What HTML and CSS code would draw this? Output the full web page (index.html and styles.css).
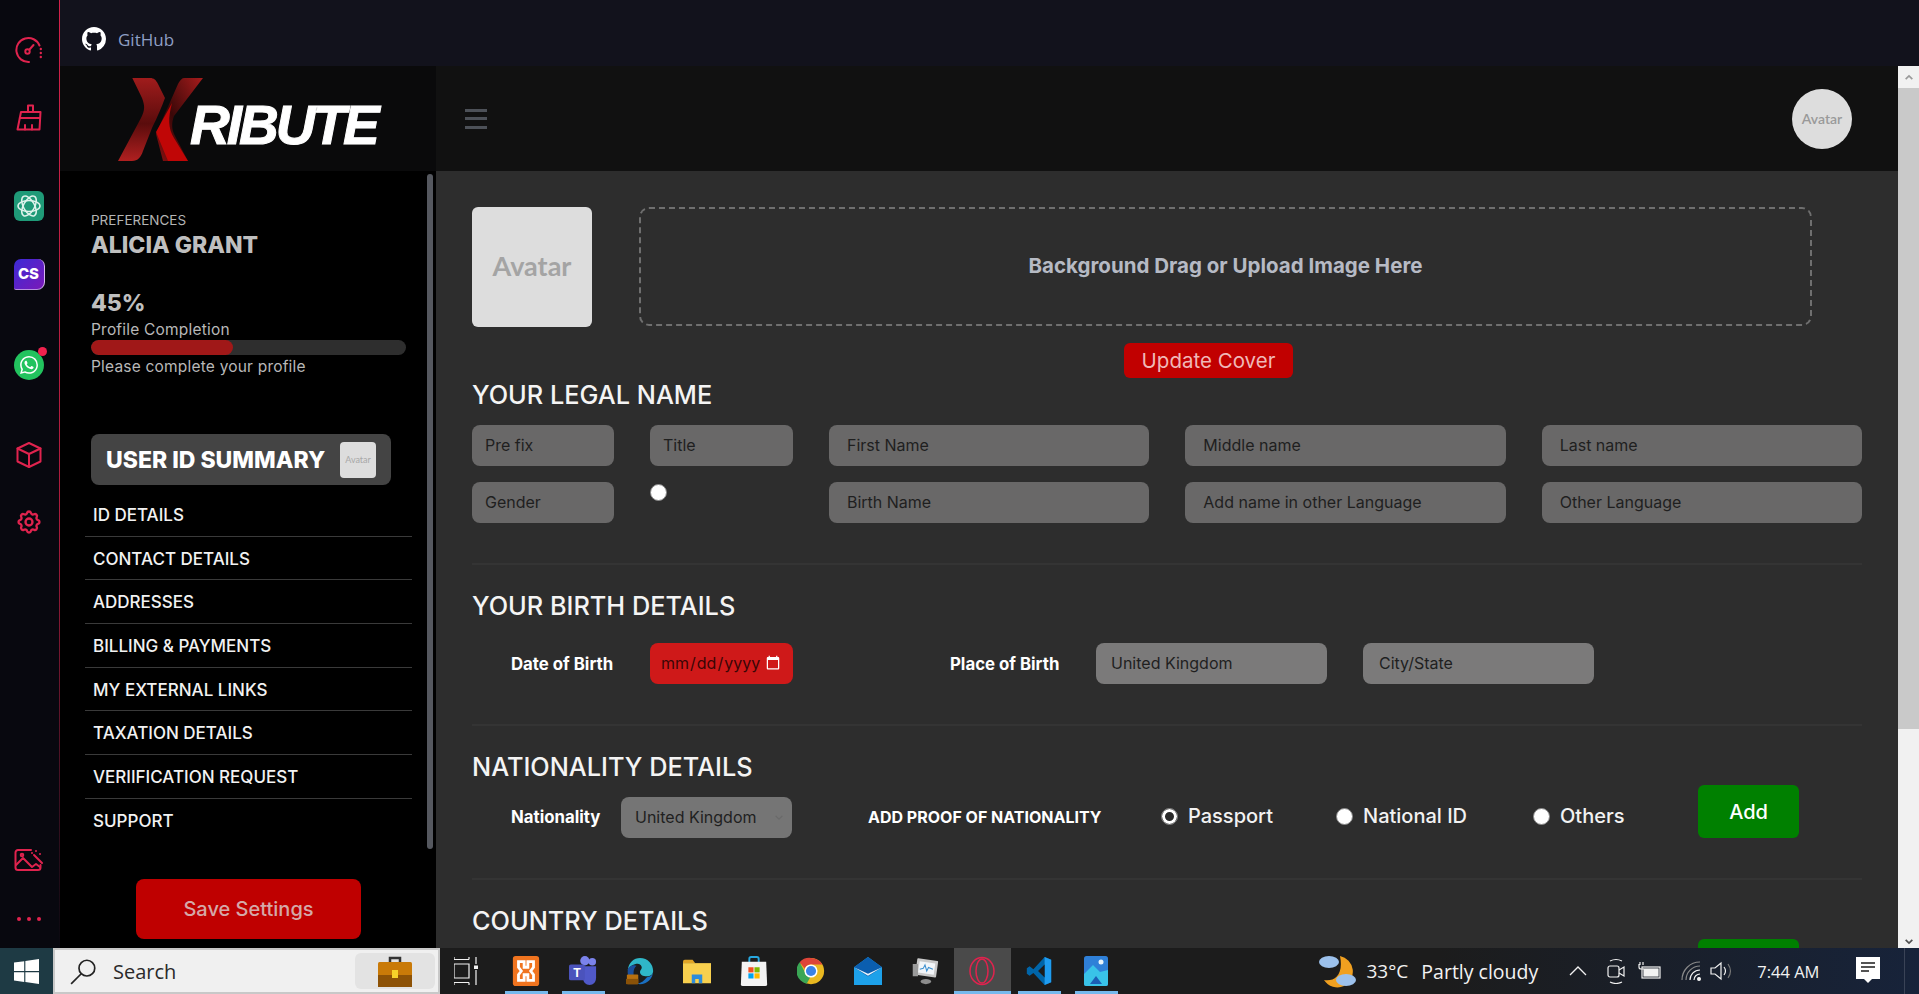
FILE: index.html
```html
<!DOCTYPE html>
<html lang="en">
<head>
  <meta charset="UTF-8">
  <meta name="viewport" content="width=device-width, initial-scale=1">
  <title>Xribute Preferences</title>
  <link rel="stylesheet" href="styles.css">
</head>
<body>
  <div class="desk">
    <nav class="rail">
      <div class="rail-group rail-top">
        <svg class="rail-icon" viewBox="0 0 28 28"><path d="M24.5 9.5A12 12 0 1 0 14 26"/><circle cx="12.500" cy="15.500" r="2.200"/><path d="M14.500 13.500l4-4.500"/><path d="M25.800 13v.1M25.800 17v.1M25.800 21v.1" stroke-width="2.400"/></svg>
        <svg class="rail-icon" viewBox="0 0 28 28"><path d="M13 8V1.500h5V8"/><path d="M6 8h19.500L24.500 25.500H2.500L6 8z"/><path d="M4.800 14h20.200"/><path d="M10 25.500v-4.500M17 25.500v-4.500"/></svg>
      </div>
      <div class="rail-group rail-apps">
        <div class="app-chat">
          <svg viewBox="0 0 30 30"><g fill="none" stroke="#dff3ec" stroke-width="1.500"><ellipse cx="15" cy="15" rx="11" ry="5.500"/><ellipse cx="15" cy="15" rx="11" ry="5.500" transform="rotate(60 15 15)"/><ellipse cx="15" cy="15" rx="11" ry="5.500" transform="rotate(120 15 15)"/></g></svg>
        </div>
        <div class="app-cs">CS</div>
        <div class="app-whatsapp">
          <svg viewBox="0 0 24 24"><path fill="#fff" d="M17.472 14.382c-.297-.149-1.758-.867-2.03-.967-.273-.099-.471-.148-.67.15-.197.297-.767.966-.94 1.164-.173.199-.347.223-.644.075-.297-.15-1.255-.463-2.39-1.475-.883-.788-1.48-1.761-1.653-2.059-.173-.297-.018-.458.13-.606.134-.133.298-.347.446-.52.149-.174.198-.298.298-.497.099-.198.05-.371-.025-.52-.075-.149-.669-1.612-.916-2.207-.242-.579-.487-.5-.669-.51-.173-.008-.371-.01-.57-.01-.198 0-.52.074-.792.372-.272.297-1.04 1.016-1.04 2.479 0 1.462 1.065 2.875 1.213 3.074.149.198 2.096 3.2 5.077 4.487.709.306 1.262.489 1.694.625.712.227 1.36.195 1.871.118.571-.085 1.758-.719 2.006-1.413.248-.694.248-1.289.173-1.413-.074-.124-.272-.198-.57-.347m-5.421 7.403h-.004a9.87 9.87 0 01-5.031-1.378l-.361-.214-3.741.982.998-3.648-.235-.374a9.86 9.86 0 01-1.51-5.26c.001-5.45 4.436-9.884 9.888-9.884 2.64 0 5.122 1.03 6.988 2.898a9.825 9.825 0 012.893 6.994c-.003 5.45-4.437 9.884-9.885 9.884m8.413-18.297A11.815 11.815 0 0012.05 0C5.495 0 .16 5.335.157 11.892c0 2.096.547 4.142 1.588 5.945L.057 24l6.305-1.654a11.882 11.882 0 005.683 1.448h.005c6.554 0 11.89-5.335 11.893-11.893a11.821 11.821 0 00-3.48-8.413Z"/></svg>
          <span class="badge"></span>
        </div>
      </div>
      <div class="rail-group rail-tools">
        <svg class="rail-icon" viewBox="0 0 28 28"><path d="M14 2l11.500 5.500v13L14 26 2.500 20.500v-13L14 2z"/><path d="M2.500 7.500L14 13l11.500-5.500M14 13v13"/></svg>
        <svg class="rail-icon" viewBox="0 0 24 24" stroke-width="1.900"><path d="M10.325 4.317c.426 -1.756 2.924 -1.756 3.35 0a1.724 1.724 0 0 0 2.573 1.066c1.543 -.94 3.31 .826 2.37 2.37a1.724 1.724 0 0 0 1.065 2.572c1.756 .426 1.756 2.924 0 3.35a1.724 1.724 0 0 0 -1.066 2.573c.94 1.543 -.826 3.31 -2.37 2.37a1.724 1.724 0 0 0 -2.572 1.065c-.426 1.756 -2.924 1.756 -3.35 0a1.724 1.724 0 0 0 -2.573 -1.066c-1.543 .94 -3.31 -.826 -2.37 -2.37a1.724 1.724 0 0 0 -1.065 -2.572c-1.756 -.426 -1.756 -2.924 0 -3.35a1.724 1.724 0 0 0 1.066 -2.573c-.94 -1.543 .826 -3.31 2.37 -2.37c1 .608 2.296 .07 2.572 -1.065z"/><circle cx="12" cy="12" r="3"/></svg>
      </div>
      <div class="rail-group rail-bottom">
        <svg class="rail-icon rail-wide" viewBox="0 0 30 24"><path d="M17 2H4a2.500 2.500 0 0 0-2.500 2.500v15A2.500 2.500 0 0 0 4 22h20a2.500 2.500 0 0 0 2.500-2.500V17"/><path d="M2 17l7-7 9 9 4-3 4 3"/><circle cx="8" cy="7" r="1.300"/><path d="M20 7l8 8M22 3v.1M26 6v.1M18 5v.1"/></svg>
        <div class="rail-dots"><span></span><span></span><span></span></div>
      </div>
    </nav>

    <div class="workspace">
      <div class="topbar">
        <svg class="github" viewBox="0 0 16 16"><path fill="#fff" d="M8 0C3.58 0 0 3.58 0 8c0 3.54 2.29 6.53 5.47 7.59.4.07.55-.17.55-.38 0-.19-.01-.82-.01-1.49-2.01.37-2.53-.49-2.69-.94-.09-.23-.48-.94-.82-1.13-.28-.15-.68-.52-.01-.53.63-.01 1.08.58 1.23.82.72 1.21 1.87.87 2.33.66.07-.52.28-.87.51-1.07-1.78-.2-3.64-.89-3.64-3.95 0-.87.31-1.59.82-2.15-.08-.2-.36-1.02.08-2.12 0 0 .67-.21 2.2.82.64-.18 1.32-.27 2-.27.68 0 1.36.09 2 .27 1.53-1.04 2.2-.82 2.2-.82.44 1.1.16 1.92.08 2.12.51.56.82 1.27.82 2.15 0 3.07-1.87 3.75-3.65 3.95.29.25.54.73.54 1.48 0 1.07-.01 1.93-.01 2.2 0 .21.15.46.55.38A8.013 8.013 0 0016 8c0-4.42-3.58-8-8-8z"/></svg>
        <span class="github-label">GitHub</span>
      </div>

      <div class="page">
        <aside class="sidebar">
          <div class="logo">
            <svg class="logo-x" viewBox="0 0 85 83">
              <defs>
                <linearGradient id="xa" x1="0" y1="0" x2="0" y2="1"><stop offset="0" stop-color="#a01c1c"/><stop offset=".55" stop-color="#5a0c0c"/><stop offset="1" stop-color="#b02020"/></linearGradient>
                <linearGradient id="xb" x1="1" y1="0" x2="0" y2="1"><stop offset="0" stop-color="#a81c1c"/><stop offset=".55" stop-color="#3a0808"/><stop offset="1" stop-color="#8a1010"/></linearGradient>
              </defs>
              <path fill="url(#xa)" d="M14.300 0H32C36 0 38 2 40 6L47 20C44 28 40 38 34 50L25 73C23 79 20 83 14 83H0L23 40C27 32 27 28 24 20Z"/>
              <path fill="url(#xb)" d="M85 0L56 38C53 46 54 52 57 58L70 83H45L38 56L60 6C63 1 64 0 67 0Z"/>
              <path fill="#c00606" d="M54 25C50 40 50 50 56 60L70 83H50L38 54Z"/>
            </svg>
            <span class="logo-text">RIBUTE</span>
          </div>
          <div class="side-body">
            <div class="side-eyebrow">PREFERENCES</div>
            <div class="side-name">ALICIA GRANT</div>
            <div class="side-pct">45%</div>
            <div class="side-note">Profile Completion</div>
            <div class="progress"><div class="progress-fill" style="width:45%"></div></div>
            <div class="side-note">Please complete your profile</div>
            <div class="summary">
              <span class="summary-title">USER ID SUMMARY</span>
              <span class="summary-avatar">Avatar</span>
            </div>
            <ul class="side-menu">
              <li>ID DETAILS</li>
              <li>CONTACT DETAILS</li>
              <li>ADDRESSES</li>
              <li>BILLING &amp; PAYMENTS</li>
              <li>MY EXTERNAL LINKS</li>
              <li>TAXATION DETAILS</li>
              <li>VERIIFICATION REQUEST</li>
              <li>SUPPORT</li>
            </ul>
            <button class="btn-save">Save Settings</button>
          </div>
          <div class="side-thumb"></div>
        </aside>

        <div class="main">
          <header class="main-head">
            <div class="burger"><span></span><span></span><span></span></div>
            <div class="head-avatar">Avatar</div>
          </header>
          <main class="content">
            <div class="cover-row">
              <div class="avatar-box">Avatar</div>
              <div class="dropzone">Background Drag or Upload Image Here</div>
            </div>
            <button class="btn-cover">Update Cover</button>

            <section class="block block-first">
              <h2>YOUR LEGAL NAME</h2>
              <div class="name-grid">
                <input class="field field-narrow" placeholder="Pre fix">
                <input class="field field-narrow" placeholder="Title">
                <input class="field" placeholder="First Name">
                <input class="field" placeholder="Middle name">
                <input class="field" placeholder="Last name">
                <input class="field field-narrow" placeholder="Gender">
                <input class="lone-radio" type="radio">
                <input class="field" placeholder="Birth Name">
                <input class="field" placeholder="Add name in other Language">
                <input class="field" placeholder="Other Language">
              </div>
            </section>

            <section class="block">
              <h2>YOUR BIRTH DETAILS</h2>
              <div class="birth-row">
                <label class="row-label">Date of Birth</label>
                <input class="date-field" type="date">
                <span></span>
                <label class="row-label row-label-place">Place of Birth</label>
                <input class="field field-light place-field" value="United Kingdom">
                <span></span>
                <input class="field field-light city-field" placeholder="City/State">
              </div>
            </section>

            <section class="block">
              <h2>NATIONALITY DETAILS</h2>
              <div class="proof-row">
                <label class="row-label">Nationality</label>
                <div class="select-wrap">
                  <select class="select"><option>United Kingdom</option></select>
                  <svg class="select-arrow" viewBox="0 0 12 8"><path d="M2 2l4 4 4-4"/></svg>
                </div>
                <span class="row-label proof-label">ADD PROOF OF NATIONALITY</span>
                <label class="radio"><input type="radio" name="proof" checked>Passport</label>
                <label class="radio"><input type="radio" name="proof">National ID</label>
                <label class="radio"><input type="radio" name="proof">Others</label>
                <button class="btn-add">Add</button>
              </div>
            </section>

            <section class="block block-last">
              <h2>COUNTRY DETAILS</h2>
              <div class="proof-row">
                <span></span><span></span><span></span><span></span><span></span><span></span>
                <button class="btn-add" aria-label="Add"></button>
              </div>
            </section>
          </main>
        </div>

        <div class="win-scroll">
          <div class="win-btn"><svg viewBox="0 0 12 8"><path d="M2 6l4-4 4 4"/></svg></div>
          <div class="win-thumb"></div>
          <div class="win-track"></div>
          <div class="win-btn win-btn-end"><svg viewBox="0 0 12 8"><path d="M2 2l4 4 4-4"/></svg></div>
        </div>
      </div>
    </div>
  </div>

  <footer class="taskbar">
    <div class="start">
      <svg viewBox="0 0 24 24"><path fill="#fff" d="M0 3.400l9.800-1.300v9.400H0zM10.900 1.900L24 0v11.500H10.900zM0 12.600h9.800V22L0 20.700zM10.900 12.600H24V24l-13.100-1.900z"/></svg>
    </div>
    <div class="search">
      <svg class="search-icon" viewBox="0 0 24 24"><circle cx="15" cy="9" r="7"/><path d="M10 14l-9 9"/></svg>
      <span class="search-text">Search</span>
      <div class="search-chip">
        <svg viewBox="0 0 34 32"><path d="M12 8V3h10v5" fill="none" stroke="#333" stroke-width="2.500"/><rect y="7" width="34" height="25" rx="1.500" fill="#c97a08"/><rect y="20" width="34" height="12" fill="#8d5206"/><rect x="14" y="15" width="6" height="8" fill="#f7d22a"/></svg>
      </div>
    </div>
    <div class="taskview">
      <svg viewBox="0 0 24 30"><g fill="none" stroke="#f2f2f2" stroke-width="1.200"><path d="M0 3.500h15M0 8h15v14H0zM0 26.500h15M22 1v7M22 14v15"/><path d="M0 1v2.500M15 1v2.500M0 26.500V29M15 26.500V29"/></g><rect x="20" y="9.500" width="4" height="3.500" fill="#f2f2f2"/></svg>
    </div>
    <div class="task-apps">
      <div class="task-app is-open">
        <svg viewBox="0 0 28 32"><rect width="28" height="32" rx="3" fill="#f0741f"/><path fill="none" stroke="#fff" stroke-width="3" d="M6 6h6v6h4V6h6v6l-3 4 3 4v6h-6v-6h-4v6H6v-6l3-4-3-4z"/></svg>
      </div>
      <div class="task-app is-open">
        <svg viewBox="0 0 30 32"><circle cx="25" cy="6" r="4" fill="#7b83eb"/><circle cx="17" cy="5" r="5" fill="#7b83eb"/><path d="M15 11h14v12c0 5-3 8-7 8s-7-3-7-8z" fill="#5059c9"/><rect y="9" width="17" height="17" rx="2" fill="#4b53bc"/><text class="app-letter" x="8.500" y="22">T</text></svg>
      </div>
      <div class="task-app">
        <svg viewBox="0 0 32 32"><path d="M2 15C3 6 9 1 16 1c9 0 15 7 15 15 0 4-3 6-7 6-5 0-8-2-8-5 0-2 2-3 2-5 0-3-4-5-7-4-5 1-8 4-9 7z" fill="#2fb7c8"/><path d="M31 16c0 9-7 15-15 15-2 0-3 0-4-1 6 0 8-3 12-7 3 0 7-2 7-7z" fill="#1a6fc1"/><path d="M2 15c0-4 6-7 10-5-4 3-5 12 0 20C6 28 1 22 2 15z" fill="#1b4f9c"/><rect x="1" y="20" width="13" height="11" rx="1" fill="#b8700f"/><rect y="25" width="14" height="6" fill="#8a5208"/></svg>
      </div>
      <div class="task-app">
        <svg viewBox="0 0 32 28"><path d="M0 3a2 2 0 0 1 2-2h9l3 4h-14z" fill="#e0a526"/><rect y="5" width="32" height="23" fill="#f8d04e"/><path d="M10 28V18h12v10h-4v-5h-4v5z" fill="#2d8cdc"/></svg>
      </div>
      <div class="task-app">
        <svg viewBox="0 0 28 32"><path d="M9 7V3a2 2 0 0 1 2-2h6a2 2 0 0 1 2 2v4" fill="none" stroke="#27a8e0" stroke-width="2"/><path d="M1 6h26l1 24a2 2 0 0 1-2 2H2a2 2 0 0 1-2-2z" fill="#f4f4f4"/><rect x="8" y="12" width="5.500" height="5.500" fill="#f25022"/><rect x="14.500" y="12" width="5.500" height="5.500" fill="#7fba00"/><rect x="8" y="18.500" width="5.500" height="5.500" fill="#00a4ef"/><rect x="14.500" y="18.500" width="5.500" height="5.500" fill="#ffb900"/></svg>
      </div>
      <div class="task-app">
        <svg viewBox="0 0 32 32"><circle cx="16" cy="16" r="15" fill="#e9b820"/><path d="M16 1a15 15 0 0 1 13 7.500H16a7.500 7.500 0 0 0-7 5L3 6A15 15 0 0 1 16 1z" fill="#dd4438"/><path d="M3 6l7 13a7.500 7.500 0 0 0 5 4.500L11 30.500A15 15 0 0 1 3 6z" fill="#3aa655"/><circle cx="16" cy="16" r="7.500" fill="#fff"/><circle cx="16" cy="16" r="5.800" fill="#3b82e6"/></svg>
      </div>
      <div class="task-app">
        <svg viewBox="0 0 30 30"><path d="M0 11L15 0l15 11v19H0z" fill="#1da1ea"/><path d="M0 11L15 0l15 11-15 10z" fill="#0b5eaf"/><path d="M0 11l15 9 15-9-15 7z" fill="#e9f5fc"/></svg>
      </div>
      <div class="task-app">
        <svg viewBox="0 0 32 32"><rect x="6" y="3" width="24" height="19" rx="1" fill="#c9c9c9" transform="rotate(8 18 12)"/><rect x="9" y="6" width="18" height="13" fill="#f2f5f8" transform="rotate(8 18 12)"/><path d="M10 14l4-1 2-4 2 7 2-4 5 2" fill="none" stroke="#3a8fd0" stroke-width="1.200"/><rect x="2" y="8" width="6" height="14" fill="#9a9a9a"/><ellipse cx="17" cy="28" rx="6" ry="3" fill="#8d8d8d"/></svg>
      </div>
      <div class="task-app is-open is-active">
        <svg viewBox="0 0 28 30"><g fill="none" stroke="#e0234e" stroke-width="1.500"><ellipse cx="14" cy="15" rx="12" ry="13.500"/><ellipse cx="14" cy="15" rx="6" ry="12"/></g></svg>
      </div>
      <div class="task-app is-open">
        <svg viewBox="0 0 26 32"><path d="M19 1l7 3v24l-7 3L7 18l-4 3-3-2v-6l3-2 4 3z" fill="#0065a9"/><path d="M19 1l7 3v24l-7 3z" fill="#1f9cf0"/><path d="M19 9l-7 7 7 7z" fill="#1c1c1c"/></svg>
      </div>
      <div class="task-app is-open">
        <svg viewBox="0 0 24 30"><rect width="24" height="30" rx="2.500" fill="#2f80d8"/><path d="M0 18l9-9 7 7 8-2v14a2 2 0 0 1-2 2H2a2 2 0 0 1-2-2z" fill="#39c3e8"/><path d="M6 28l6-8 6 8z" fill="#1b5fb5"/><circle cx="17" cy="6" r="2.500" fill="#e8f3fb"/></svg>
      </div>
    </div>
    <div class="tray">
      <svg class="tray-weather" viewBox="0 0 38 36"><path d="M22 3a16 16 0 0 1 4 30 16 16 0 0 1-20-6c10 2 20-5 16-24z" fill="#f0a020"/><ellipse cx="11" cy="9" rx="10" ry="6" fill="#9cc1ec"/><ellipse cx="28" cy="27" rx="10" ry="6" fill="#9cc1ec"/></svg>
      <span class="tray-temp">33°C</span>
      <span class="tray-cond">Partly cloudy</span>
      <svg class="tray-chev" viewBox="0 0 20 12"><path d="M2 10l8-8 8 8"/></svg>
      <svg class="tray-ic tray-meet" viewBox="0 0 18 26"><rect x="1" y="8" width="11" height="11" rx="2"/><path d="M12 12l5-3v9l-5-3M3 3q6-3 12 0M3 24q6 3 12 0"/></svg>
      <svg class="tray-ic tray-batt" viewBox="0 0 24 20"><rect x="4" y="6" width="18" height="11"/><rect x="6" y="8" width="14" height="7" fill="#f2f2f2"/><path d="M1 3v3a2 2 0 0 0 2 2h3M2 1v3M5 1v3"/></svg>
      <svg class="tray-ic tray-wifi" viewBox="0 0 20 20"><path d="M1 19A18 18 0 0 1 19 1M5 19A14 14 0 0 1 19 5" stroke="#8b8b8b"/><path d="M9 19A10 10 0 0 1 19 9M13 19A6 6 0 0 1 19 13"/><circle cx="18" cy="18" r="1.400" fill="#f2f2f2"/></svg>
      <svg class="tray-ic tray-vol" viewBox="0 0 24 20"><path d="M1 7h4l6-5v16l-6-5H1z"/><path d="M14 6q3 4 0 8"/><path d="M18 3q5 7 0 14" stroke="#777"/></svg>
      <span class="tray-time">7:44 AM</span>
      <svg class="tray-notif" viewBox="0 0 24 28"><path fill="#fff" d="M0 0h24v22h-8l-4 4-4-4H0z"/><path d="M5 6h14M5 10h14M5 14h8" stroke="#1c1c1c" stroke-width="1.300"/></svg>
      <span class="tray-edge"></span>
    </div>
  </footer>
</body>
</html>
```

FILE: styles.css
```css
* {
  box-sizing: border-box;
}
html, body {
  margin: 0;
  height: 100%;
}
body {
  display: flex;
  flex-direction: column;
  overflow: hidden;
  font-family: 'Inter', 'Open Sans', sans-serif;
  background: #08080f;
}
button, input, select {
  font-family: inherit;
}

.desk {
  flex: 1;
  display: flex;
  min-height: 0;
}

/* icon rail */
.rail {
  width: 60px;
  flex-shrink: 0;
  display: flex;
  flex-direction: column;
  align-items: center;
  background: #08080f;
  border-right: 1px solid;
  border-image: linear-gradient(#d2214a 0%, #a81c3c 55%, #3a1020 85%, #08080f 100%) 1;
  padding-right: 1px;
}
.rail-group {
  display: flex;
  flex-direction: column;
  align-items: center;
}
.rail-top {
  padding-top: 36px;
  gap: 40px;
}
.rail-apps {
  margin-top: 59px;
}
.rail-tools {
  margin-top: 61px;
  gap: 39px;
}
.rail-bottom {
  margin-top: auto;
  padding-bottom: 27px;
  gap: 44px;
}
.rail-icon {
  width: 28px;
  height: 28px;
  fill: none;
  stroke: #e0234e;
  stroke-width: 2;
  stroke-linecap: round;
  stroke-linejoin: round;
}
.rail-wide {
  width: 30px;
  height: 26px;
}
.rail-dots {
  display: flex;
  gap: 6px;
}
.rail-dots span {
  width: 4px;
  height: 4px;
  border-radius: 50%;
  background: #e0234e;
}
.app-chat {
  width: 30px;
  height: 30px;
  border-radius: 6px;
  background: #1f9a78;
}
.app-chat svg {
  display: block;
}
.app-cs {
  width: 31px;
  height: 31px;
  margin-top: 38px;
  border-radius: 7px 7px 8px 2px;
  background: linear-gradient(135deg, #3c2bd6, #7a18b8);
  border-right: 1px solid #d8b8f0;
  border-bottom: 1px solid #b890e0;
  color: #fff;
  font: 800 15px/29px 'Inter', sans-serif;
  text-align: center;
}
.app-whatsapp {
  position: relative;
  width: 30px;
  height: 30px;
  margin-top: 60px;
  padding: 6px;
  border-radius: 50%;
  background: #22c35e;
}
.app-whatsapp svg {
  display: block;
  width: 18px;
  height: 18px;
}
.badge {
  position: absolute;
  top: -3px;
  right: -3px;
  width: 9px;
  height: 9px;
  border-radius: 50%;
  background: #f0224e;
}

.workspace {
  flex: 1;
  min-width: 0;
  display: flex;
  flex-direction: column;
}
.topbar {
  height: 66px;
  flex-shrink: 0;
  display: flex;
  align-items: center;
  padding: 12px 22px 0;
  background: #12121c;
}
.github {
  width: 24px;
  height: 24px;
}
.github-label {
  margin-left: 12px;
  color: #8f9fc4;
  font-size: 17px;
  font-family: 'Open Sans', sans-serif;
}

.page {
  flex: 1;
  display: flex;
  min-height: 0;
}

/* sidebar */
.sidebar {
  position: relative;
  width: 376px;
  flex-shrink: 0;
  background: #000;
  overflow: hidden;
}
.logo {
  height: 105px;
  display: flex;
  align-items: flex-end;
  padding: 12px 0 10px 58px;
  background: #0a0a0b;
}
.logo-x {
  width: 85px;
  height: 83px;
  flex-shrink: 0;
}
.logo-text {
  margin: 0 0 8px -13px;
  color: #fff;
  font: italic 700 55px/56px 'Liberation Sans', sans-serif;
  letter-spacing: -3px;
  -webkit-text-stroke: 1px #fff;
}
.side-thumb {
  position: absolute;
  top: 108px;
  left: 367px;
  width: 6px;
  height: 675px;
  border-radius: 3px;
  background: #55585f;
}
.side-body {
  padding: 39px 0 0 31px;
}
.side-eyebrow {
  color: #b4b4b4;
  font-size: 13.500px;
  line-height: 20px;
}
.side-name {
  color: #bfbfbf;
  font-size: 23px;
  font-weight: 800;
  line-height: 30px;
}
.side-pct {
  margin-top: 28px;
  color: #bfbfbf;
  font-size: 23px;
  font-weight: 800;
  line-height: 30px;
}
.side-note {
  margin-top: 1px;
  color: #b8b8b8;
  font-size: 15.500px;
  letter-spacing: .2px;
  line-height: 21px;
  white-space: nowrap;
}
.progress {
  width: 315px;
  height: 15px;
  border-radius: 8px;
  background: #2e2e2e;
  overflow: hidden;
}
.progress-fill {
  height: 100%;
  border-radius: 8px;
  background: #a01818;
}
.summary {
  width: 300px;
  height: 51px;
  margin-top: 57px;
  display: flex;
  align-items: center;
  justify-content: space-between;
  padding: 0 15px;
  border-radius: 8px;
  background: #444;
}
.summary-title {
  color: #fff;
  font-size: 23px;
  font-weight: 800;
  white-space: nowrap;
}
.summary-avatar {
  width: 36px;
  height: 36px;
  border-radius: 4px;
  background: #ddd;
  color: #a8a8a8;
  font-size: 9px;
  font-family: 'Lato', sans-serif;
  line-height: 36px;
  text-align: center;
}
.side-menu {
  width: 327px;
  margin: 8px 0 0 -6px;
  padding: 0;
  list-style: none;
}
.side-menu li {
  height: 43.700px;
  padding-left: 8px;
  border-bottom: 1px solid #3a3a3a;
  color: #f2f2f2;
  font-size: 17px;
  font-weight: 500;
  line-height: 44px;
  white-space: nowrap;
}
.side-menu li:last-child {
  border-bottom: 0;
}
.btn-save {
  display: block;
  width: 225px;
  height: 60px;
  margin: 36px 0 0 45px;
  border: 0;
  border-radius: 8px;
  background: #bf0000;
  color: #d5a8a8;
  font-size: 20px;
  font-weight: 500;
}

/* main column */
.main {
  flex: 1;
  min-width: 0;
  display: flex;
  flex-direction: column;
  background: #2d2d2d;
}
.main-head {
  height: 105px;
  flex-shrink: 0;
  display: flex;
  align-items: center;
  justify-content: space-between;
  padding: 0 46px 0 29px;
  background: #111;
}
.burger {
  display: flex;
  flex-direction: column;
  gap: 5.500px;
  width: 22px;
}
.burger span {
  height: 3px;
  background: #4d5158;
}
.head-avatar {
  width: 60px;
  height: 60px;
  border-radius: 50%;
  background: #ddd;
  color: #999;
  font: 600 14px/60px 'Lato', sans-serif;
  text-align: center;
}
.content {
  flex: 1;
  min-height: 0;
  overflow: hidden;
  padding: 36px 36px 0;
}
.cover-row {
  display: flex;
  gap: 47px;
}
.avatar-box {
  width: 120px;
  height: 120px;
  flex-shrink: 0;
  border-radius: 6px;
  background: #ddd;
  color: #a4a4a4;
  font: 700 27px/118px 'Lato', sans-serif;
  text-align: center;
}
.dropzone {
  width: 1173px;
  height: 119px;
  border: 2px dashed #6f6f6f;
  border-radius: 10px;
  color: #b6bac4;
  font-size: 20.500px;
  font-weight: 700;
  line-height: 113px;
  text-align: center;
}
.btn-cover {
  display: block;
  width: 169px;
  height: 35px;
  margin: 16px 0 0 652px;
  border: 0;
  border-radius: 6px;
  background: #c10000;
  color: #f0b8b8;
  font-size: 20.500px;
}

.block {
  padding-top: 26px;
  padding-bottom: 40px;
  border-bottom: 2px solid #343434;
}
.block-first {
  padding-top: 2px;
}
.block-last {
  border-bottom: 0;
}
h2 {
  margin: 0;
  color: #f4f4f4;
  font-size: 25.300px;
  font-weight: 500;
  line-height: 30px;
  white-space: nowrap;
}
.name-grid {
  display: grid;
  grid-template-columns: 142px 143px 1fr 1fr 1fr;
  gap: 16px 36px;
  margin-top: 15px;
}
.field {
  width: 100%;
  height: 41px;
  padding: 0 18px 2px;
  border: 0;
  border-radius: 8px;
  background: #696868;
  color: #1f1f1f;
  font-size: 16px;
}
.field::placeholder {
  color: #1f1f1f;
  opacity: 1;
}
.field-narrow {
  padding-left: 13px;
}
.field-light {
  background: #7b7a7a;
}
.place-field {
  padding-left: 15px;
}
.city-field {
  padding-left: 16px;
}
.lone-radio {
  appearance: none;
  width: 17px;
  height: 17px;
  margin: 2px 0 0;
  border: 1px solid #888;
  border-radius: 50%;
  background: #fff;
}
.birth-row {
  display: grid;
  grid-template-columns: 178px 143px 157px 146px 231px 36px 231px;
  align-items: center;
  margin-top: 22px;
}
.row-label {
  padding-left: 39px;
  color: #fff;
  font-size: 16.800px;
  font-weight: 700;
  white-space: nowrap;
}
.row-label-place {
  padding-left: 0;
}
.date-field {
  width: 143px;
  height: 41px;
  padding: 0 10px 2px;
  border: 0;
  border-radius: 8px;
  background: #cf1919;
  color: #3a0606;
  color-scheme: dark;
  font-size: 16px;
}
.proof-row {
  display: grid;
  grid-template-columns: 149px 171px 369px 175px 197px 165px 101px;
  align-items: end;
  min-height: 53px;
  margin-top: 3px;
}
.proof-row .row-label {
  align-self: end;
  line-height: 41px;
}
.select-wrap {
  position: relative;
  height: 41px;
}
.select {
  appearance: none;
  width: 100%;
  height: 41px;
  padding: 0 14px 2px;
  border: 0;
  border-radius: 8px;
  background: #757575;
  color: #1f1f1f;
  font-size: 16px;
}
.select-arrow {
  position: absolute;
  top: 17px;
  right: 8px;
  width: 10px;
  height: 7px;
  fill: none;
  stroke: #6a6a6a;
  stroke-width: 1.500;
}
.proof-row .proof-label {
  padding-left: 76px;
  font-size: 16px;
}
.radio {
  display: flex;
  align-items: center;
  gap: 10px;
  height: 41px;
  padding-bottom: 3px;
  color: #f2f2f2;
  font-size: 20px;
  font-weight: 500;
  white-space: nowrap;
}
.radio input {
  appearance: none;
  width: 17px;
  height: 17px;
  margin: 0;
  border: 1px solid #888;
  border-radius: 50%;
  background: #fff;
}
.radio input:checked {
  background: #2a2a2a;
  box-shadow: inset 0 0 0 3px #fff;
}
.btn-add {
  width: 101px;
  height: 53px;
  border: 0;
  border-radius: 6px;
  background: #008000;
  color: #fff;
  font-size: 20px;
  font-weight: 500;
}

/* browser scrollbar */
.win-scroll {
  width: 21px;
  flex-shrink: 0;
  display: flex;
  flex-direction: column;
  background: #f1f1f1;
}
.win-btn {
  height: 22px;
  display: flex;
  align-items: center;
  justify-content: center;
  flex-shrink: 0;
}
.win-btn svg {
  width: 10px;
  height: 7px;
  fill: none;
  stroke: #9a9a9a;
  stroke-width: 2;
}
.win-btn-end {
  height: 14px;
}
.win-btn-end svg {
  stroke: #505050;
}
.win-thumb {
  height: 641px;
  flex-shrink: 0;
  background: #c9c9c9;
}
.win-track {
  flex: 1;
}

/* windows taskbar */
.taskbar {
  height: 46px;
  flex-shrink: 0;
  display: flex;
  align-items: stretch;
  background: linear-gradient(90deg, #1c1c1c 75%, #17233a 100%);
  color: #f2f2f2;
  font-family: 'Open Sans', sans-serif;
}
.start {
  width: 53px;
  flex-shrink: 0;
  display: flex;
  align-items: center;
  justify-content: center;
  background: #1e3a44;
}
.start svg {
  width: 25px;
  height: 25px;
}
.search {
  width: 387px;
  flex-shrink: 0;
  display: flex;
  align-items: center;
  padding: 0 3px 0 15px;
  border: 2px solid #c8c8c8;
  background: #f0f0f0;
}
.search-icon {
  width: 27px;
  height: 27px;
  fill: none;
  stroke: #222;
  stroke-width: 1.500;
}
.search-text {
  margin-left: 16px;
  color: #2a2a2a;
  font-size: 20px;
}
.search-chip {
  width: 80px;
  height: 36px;
  margin-left: auto;
  display: flex;
  align-items: center;
  justify-content: center;
  border-radius: 6px;
  background: #e3e3e3;
}
.search-chip svg {
  width: 34px;
  height: 32px;
}
.taskview {
  width: 57.500px;
  flex-shrink: 0;
  display: flex;
  align-items: center;
  justify-content: flex-start;
  padding-left: 14px;
}
.taskview svg {
  width: 24px;
  height: 30px;
}
.task-apps {
  display: flex;
}
.task-app {
  position: relative;
  width: 57px;
  display: flex;
  align-items: center;
  justify-content: center;
}
.task-app svg {
  width: 28px;
  height: 30px;
}
.task-app.is-open::after {
  content: "";
  position: absolute;
  left: 7px;
  right: 7px;
  bottom: 0;
  height: 3px;
  background: #76b9ed;
}
.task-app.is-active {
  background: #4a4a4a;
}
.task-app.is-active::after {
  left: 0;
  right: 0;
}
.app-letter {
  fill: #fff;
  font: 700 13px 'Inter', sans-serif;
  text-anchor: middle;
}
.tray {
  flex: 1;
  display: flex;
  align-items: center;
  padding-left: 193px;
}
.tray-weather {
  width: 38px;
  height: 36px;
}
.tray-temp {
  margin-left: 11px;
  font-size: 19px;
}
.tray-cond {
  margin-left: 13px;
  font-size: 19.500px;
  white-space: nowrap;
}
.tray-chev {
  width: 20px;
  height: 12px;
  margin-left: 30px;
  fill: none;
  stroke: #f2f2f2;
  stroke-width: 1.300;
}
.tray-ic {
  fill: none;
  stroke: #f2f2f2;
  stroke-width: 1.200;
}
.tray-meet {
  width: 18px;
  height: 26px;
  margin-left: 19px;
}
.tray-batt {
  width: 24px;
  height: 20px;
  margin-left: 13px;
}
.tray-wifi {
  width: 20px;
  height: 20px;
  margin-left: 19px;
}
.tray-vol {
  width: 24px;
  height: 20px;
  margin-left: 9px;
}
.tray-time {
  margin-left: 23px;
  font-size: 16.500px;
  white-space: nowrap;
}
.tray-notif {
  width: 24px;
  height: 28px;
  margin-left: 37px;
}
.tray-edge {
  width: 1px;
  height: 100%;
  margin-left: 24px;
  background: #3a4356;
}
```
